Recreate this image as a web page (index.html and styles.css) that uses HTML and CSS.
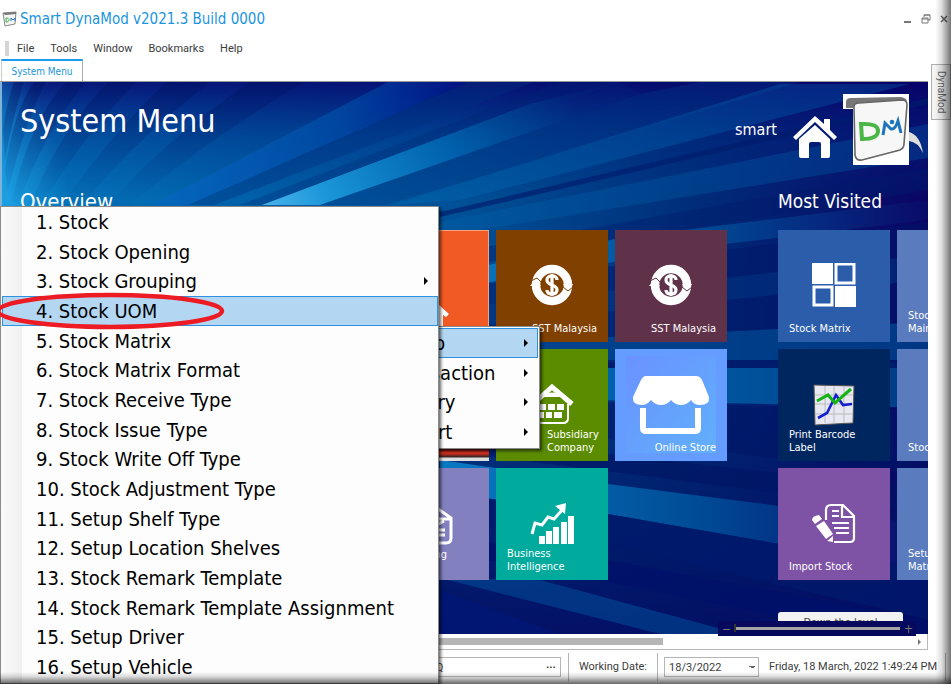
FILE: index.html
```html
<!DOCTYPE html>
<html lang="en">
<head>
<meta charset="utf-8">
<title>Smart DynaMod</title>
<link rel="stylesheet" href="styles.css">
</head>
<body>
<svg class="defs" aria-hidden="true">
  <symbol id="coin" viewBox="0 0 44 42">
    <circle cx="22" cy="21" r="16" fill="none" stroke="#fff" stroke-width="8.5"/>
    <path d="M0 22l6-7 5 7zM33 20l10 0-5 7z" fill="#fff"/>
    <path d="M1 17l6-3 4 4M33 23l5 4 5-4" fill="none" stroke="currentColor" stroke-width="1"/>
    <path d="M27 16c0-3-2-4-5-4s-5 1-5 4 2 4 5 5 5 2 5 5-2 4-5 4-5-1-5-4M22 10v22" fill="none" stroke="#fff" stroke-width="3.2"/>
  </symbol>
</svg>
<div class="app">
  <header class="titlebar">
    <svg class="logo" viewBox="0 0 16 16"><path d="M1 2l13-1-1 12-10 2z" fill="#f4f4f4" stroke="#888" stroke-width="1"/><path d="M1 2l13-1v2L3 4z" fill="#777"/><path d="M4 7v4c4 0 4-4 0-4z" fill="none" stroke="#3fae49"/><path d="M9 10V7l2 2 2-2v3" fill="none" stroke="#1f7ac4"/></svg>
    <h1 class="title">Smart DynaMod v2021.3 Build 0000</h1>
    <div class="winbtns">
      <button aria-label="Minimize"><svg viewBox="0 0 10 10"><path d="M1 8h7" stroke="#777" stroke-width="2"/></svg></button>
      <button aria-label="Restore"><svg viewBox="0 0 10 10"><path d="M3 3V1h6v5H7M1 4h6v5H1zM1 5h6M3 1h6" fill="none" stroke="#777"/></svg></button>
      <button aria-label="Close"><svg viewBox="0 0 10 10"><path d="M2 2l6 6M8 2l-6 6" stroke="#666" stroke-width="1.5"/></svg></button>
    </div>
  </header>
  <nav class="menubar">
    <button>File</button><button>Tools</button><button>Window</button><button>Bookmarks</button><button>Help</button>
  </nav>
  <div class="workspace">
    <main class="main">
      <div class="tabs"><button class="tab">System Menu</button></div>
      <section class="panel">
        <svg class="rays" viewBox="2 82 926 552" preserveAspectRatio="none" aria-hidden="true">
          <defs>
            <linearGradient id="base" x1="2" x2="928" y1="205" y2="250" gradientUnits="userSpaceOnUse"><stop offset="0" stop-color="#1c9fe2"/><stop offset=".07" stop-color="#0474ba"/><stop offset=".25" stop-color="#0062aa"/><stop offset=".5" stop-color="#005096"/><stop offset=".75" stop-color="#002c78"/><stop offset="1" stop-color="#0a0464"/></linearGradient>
            <linearGradient id="top" x1="0" y1="82" x2="0" y2="200" gradientUnits="userSpaceOnUse"><stop offset="0" stop-color="#08006a" stop-opacity=".8"/><stop offset=".5" stop-color="#002480" stop-opacity=".4"/><stop offset="1" stop-color="#00308a" stop-opacity="0"/></linearGradient>
            <linearGradient id="glow" x1="2" y1="180" x2="60" y2="160" gradientUnits="userSpaceOnUse"><stop offset="0" stop-color="#1c9fe2" stop-opacity=".8"/><stop offset="1" stop-color="#0474ba" stop-opacity="0"/></linearGradient>
            <linearGradient id="fan" x1="0" y1="82" x2="0" y2="200" gradientUnits="userSpaceOnUse"><stop offset="0" stop-color="#00105e" stop-opacity=".42"/><stop offset="1" stop-color="#00307e" stop-opacity=".05"/></linearGradient>
            <linearGradient id="cyan" x1="262" x2="570" y1="205" y2="95" gradientUnits="userSpaceOnUse"><stop offset="0" stop-color="#4ab4ea"/><stop offset=".2" stop-color="#1a95d8"/><stop offset=".6" stop-color="#0068b2" stop-opacity=".8"/><stop offset="1" stop-color="#004a98" stop-opacity=".1"/></linearGradient>
            <linearGradient id="blue" x1="150" x2="470" y1="205" y2="82" gradientUnits="userSpaceOnUse"><stop offset="0" stop-color="#0569bd"/><stop offset=".6" stop-color="#0046a0"/><stop offset="1" stop-color="#001080"/></linearGradient>
            <linearGradient id="lit" x1="430" x2="928" y1="0" y2="0" gradientUnits="userSpaceOnUse"><stop offset="0" stop-color="#0078c4"/><stop offset=".5" stop-color="#005aa2"/><stop offset="1" stop-color="#003a88"/></linearGradient>
            <linearGradient id="fade" x1="430" x2="928" y1="0" y2="0" gradientUnits="userSpaceOnUse"><stop offset="0" stop-color="#0a7cc6"/><stop offset=".55" stop-color="#004a94"/><stop offset="1" stop-color="#0a0a6a"/></linearGradient>
            <linearGradient id="floor" x1="600" y1="380" x2="560" y2="640" gradientUnits="userSpaceOnUse"><stop offset="0" stop-color="#001464" stop-opacity="0"/><stop offset=".5" stop-color="#001464" stop-opacity=".7"/><stop offset="1" stop-color="#040860" stop-opacity=".85"/></linearGradient>
          </defs>
          <path d="M2 82h926v552H2z" fill="url(#base)"/>
          <path d="M2 82h926v552H2z" fill="url(#floor)"/>
          <path d="M2 82h926v120H2z" fill="url(#top)"/>
          <path d="M2 82h70v130H2z" fill="url(#glow)"/>
          <g fill="url(#fan)">
            <path d="M3 130Q6 105 14 82h10Q12 120 5 160z"/>
            <path d="M5 170Q14 110 34 82h12Q26 120 8 190z"/>
            <path d="M12 200Q30 120 66 82h20Q45 130 18 205z"/>
            <path d="M30 205Q60 130 108 82h28Q80 140 42 205z"/>
            <path d="M62 205Q110 135 166 82h44Q130 145 82 205z"/>
            <path d="M108 205Q170 135 250 82h54Q200 145 130 205z"/>
          </g>
          <path d="M152 205L388 82h80L188 205z" fill="url(#blue)"/>
          <path d="M188 205L468 82h66L214 205z" fill="#003080" opacity=".4"/>
          <path d="M240 205L560 82h60L262 205z" fill="#002474" opacity=".3"/>
          <path d="M262 205L530 104 620 82 640 94 320 205z" fill="url(#cyan)"/>
          <path d="M320 205L640 94 700 82h100L385 205z" fill="#003888" opacity=".35"/>
          <path d="M390 205L780 84h130L460 200z" fill="#0070bc" opacity=".3"/>
          <path d="M440 212L928 98v6L440 217z" fill="#001c6c" opacity=".65"/>
          <path d="M440 222L928 124v34L440 236z" fill="#0066b0" opacity=".3"/>
          <path d="M440 255L928 168v22L440 270z" fill="#001c6c" opacity=".4"/>
          <path d="M440 275L620 238 928 200v20L725 244 440 290z" fill="url(#fade)"/>
          <path d="M440 290L928 222v140H440z" fill="#001668" opacity=".5"/>
          <path d="M440 310L928 255v25L440 328z" fill="#004c96" opacity=".3"/>
          <path d="M440 345L928 322v38H440z" fill="#005098" opacity=".65"/>
          <path d="M440 362h488v6H440z" fill="#001c6c"/>
          <path d="M440 368h488v40L440 396z" fill="url(#lit)"/>
          <path d="M440 398L928 410v65L440 420z" fill="#001666" opacity=".6"/>
          <path d="M440 435L928 490v22L440 450z" fill="#001462" opacity=".6"/>
          <path d="M440 460L608 484 928 525v45L608 514 440 492z" fill="url(#fade)"/>
          <path d="M440 495L608 514 928 570v50L608 545 440 520z" fill="#001a6c" opacity=".75"/>
          <path d="M440 535L608 560 928 620v14h-60L608 582 440 552z" fill="#00106a" opacity=".7"/>
          <path d="M540 580L718 628 718 634H660L440 578z" fill="#0064ac" opacity=".4"/>
          <path d="M440 590L560 634H440z" fill="#00187a" opacity=".6"/>
        </svg>
        <div class="panel-head">
          <h2>System Menu</h2>
          <div class="user">
            <span>smart</span>
            <svg class="home" viewBox="0 0 44 42"><path d="M22 0l9 8V3h6v11l7 7-3 3L22 6 3 24l-3-3z" fill="#fff"/><path d="M22 9l15 14v17q0 2-2 2h-7V28q0-2-2-2h-8q-2 0-2 2v14H8q-2 0-2-2V23z" fill="#fff"/></svg>
            <svg class="brand" viewBox="0 0 82 72"><path d="M0 0h66v71H10V15H0z" fill="#fff"/><path d="M66 38q11 3 14 21-5-11-14-12z" fill="#ddd"/><path d="M3 14V8q0-4 5-4l50-1q6 1 6 5l-50 2-4 4z" fill="#777"/><path d="M11 13q0-4 5-4l43-3q5 0 5 5l-3 39q0 4-4 6L19 66q-6 1-7-5z" fill="#f7f7f7" stroke="#666" stroke-width="1.6"/><path d="M18 30l1 15q16 0 16-8 0-8-17-7z" fill="none" stroke="#4bb548" stroke-width="4"/><path d="M40 41l2-12 6 6q4 1 7-8l3 12" fill="none" stroke="#1c75bc" stroke-width="3"/><circle cx="49" cy="28" r="2.3" fill="#1c75bc"/></svg>
          </div>
        </div>
        <div class="groups">
          <section class="group overview">
            <h3>Overview</h3>
            <div class="tiles">
              <a href="#" class="tile orange c4" aria-label="Home"><svg class="cottage" viewBox="0 0 44 42"><path d="M2 23L22 4l21 19-3 3-3-2v16H7V24l-3 2z" fill="#fff"/></svg></a>
              <a href="#" class="tile brown right"><svg class="icon"><use href="#coin"/></svg><span>SST Malaysia</span></a>
              <a href="#" class="tile plum right"><svg class="icon"><use href="#coin"/></svg><span>SST Malaysia</span></a>
              <a href="#" class="tile photo c4" aria-label="Photo"></a>
              <a href="#" class="tile green right"><svg class="icon" viewBox="0 0 44 42"><path d="M3 21L22 4l20 17" fill="none" stroke="#fff" stroke-width="5"/><path d="M12 14q10-9 20 0z" fill="#fff"/><path d="M7 21v14q0 5 5 5h21q5 0 5-5V21" fill="none" stroke="#fff" stroke-width="2"/><path d="M10 21h6v6h-6zM18 21h7v6h-7zM27 21h7v6h-7zM10 29h4v6h-4zM16 29h6v6h-6zM24 29h8v6h-8z" fill="#fff"/></svg><span>Subsidiary Company</span></a>
              <a href="#" class="tile sky right"><svg class="shop" viewBox="0 0 90 97"><defs><linearGradient id="shopbg" x1="0" y1="0" x2="1" y2="1"><stop offset="0" stop-color="#6a92ff"/><stop offset="1" stop-color="#60b0fb"/></linearGradient></defs><path d="M0 0h90v97H0z" fill="url(#shopbg)"/><path d="M20 20h50q4 0 6 4l7 17q1 8-9 8-6 0-9-5-4 5-10 5t-10-5q-4 5-10 5t-10-5q-4 5-9 5-10 0-9-8l8-17q2-4 5-4z" fill="#fff"/><path d="M17 52v20q0 3 3 3h49q3 0 3-3V52" fill="none" stroke="#fff" stroke-width="6"/></svg><span>Online Store</span></a>
              <a href="#" class="tile lilac c4 right wide"><svg class="icon" viewBox="0 0 44 42"><path d="M4 17L22 2l20 14v20q0 5-5 5H8q-4 0-4-5zM4 17h38M26 24l9-5M28 28h8M28 33h8" fill="none" stroke="#fff" stroke-width="3"/></svg><span>e-Invoicing<br>&nbsp;</span></a>
              <a href="#" class="tile teal"><svg class="icon" viewBox="0 0 44 42"><path d="M9 34h6v8H9zM16 29h6v13h-6zM23 25h6v17h-6zM31 20h6v22h-6zM38 14h6v28h-6z" fill="#fff"/><path d="M2 32l3-11 7 2 6-8 6 2 9-10" fill="none" stroke="#fff" stroke-width="3"/><path d="M25 4l11-3-1 11z" fill="#fff"/></svg><span>Business<br>Intelligence</span></a>
            </div>
          </section>
          <section class="group visited">
            <h3>Most Visited</h3>
            <div class="tiles">
              <a href="#" class="tile royal"><svg class="icon" viewBox="0 0 44 44"><path d="M0 0h21v21H0zM23 23h21v21H23z" fill="#fff"/><path d="M24 1h18v19H24zM2 24h18v18H2z" fill="none" stroke="#fff" stroke-width="3"/></svg><span>Stock Matrix</span></a>
              <a href="#" class="tile slate"><span>Stock<br>Maintenance</span></a>
              <a href="#" class="tile navy"><svg class="icon" viewBox="0 0 44 42"><path d="M2 2l40 1-1 37-38 2z" fill="#e8e8f2" stroke="#555"/><path d="M13 3v37M22 3v37M32 3v37M3 12h38M3 21h38M3 31h38" stroke="#bbb"/><path d="M6 35l9-5 9-18 7 10 9-1" fill="none" stroke="#1420d0" stroke-width="2.6"/><path d="M5 18l11-6 7 8 16-14" fill="none" stroke="#14b414" stroke-width="3"/></svg><span>Print Barcode<br>Label</span></a>
              <a href="#" class="tile slate"><span>Stock In</span></a>
              <a href="#" class="tile violet"><svg class="icon" viewBox="0 0 44 42"><path d="M14 18V8q0-5 5-5h12l11 11v22q0 4-4 4H22M30 4v11h11M20 9h7M20 14h7M20 21h17M22 26h15M24 31h13" fill="none" stroke="#fff" stroke-width="2.2"/><path d="M0 18q0-4 7-5l3 4-7 5zM4 24l8-5 9 13-7 5zM15 39l6-5v6z" fill="#fff"/></svg><span>Import Stock</span></a>
              <a href="#" class="tile slate"><span>Setup<br>Matrix</span></a>
            </div>
            <button class="down">Down the level</button>
          </section>
        </div>
        <div class="zoombar"><button aria-label="Zoom out">−</button><input type="range" aria-label="Zoom" min="0" max="100" value="0"><button aria-label="Zoom in">+</button></div>
      </section>
      <div class="hscroll"><div class="thumb"></div><span class="arrow-r"></span></div>
    </main>
    <aside class="side"><button>DynaMod</button></aside>
  </div>
  <footer class="status">
    <div class="field"><input type="text" value="HQ" aria-label="Branch"><button aria-label="Browse">···</button></div>
    <label for="wdate">Working Date:</label>
    <select id="wdate"><option>18/3/2022</option></select>
    <time>Friday, 18 March, 2022 1:49:24 PM</time>
  </footer>
</div>

<div class="menu sub" role="menu">
  <button class="active arrow" role="menuitem">1. Setup</button>
  <button class="arrow" role="menuitem">2. Transaction</button>
  <button class="arrow" role="menuitem">3. Inquiry</button>
  <button class="arrow" role="menuitem">4. Report</button>
</div>
<div class="menu primary" role="menu">
  <button role="menuitem">1. Stock</button>
  <button role="menuitem">2. Stock Opening</button>
  <button class="arrow" role="menuitem">3. Stock Grouping</button>
  <button class="active" role="menuitem">4. Stock UOM</button>
  <button role="menuitem">5. Stock Matrix</button>
  <button role="menuitem">6. Stock Matrix Format</button>
  <button role="menuitem">7. Stock Receive Type</button>
  <button role="menuitem">8. Stock Issue Type</button>
  <button role="menuitem">9. Stock Write Off Type</button>
  <button role="menuitem">10. Stock Adjustment Type</button>
  <button role="menuitem">11. Setup Shelf Type</button>
  <button role="menuitem">12. Setup Location Shelves</button>
  <button role="menuitem">13. Stock Remark Template</button>
  <button role="menuitem">14. Stock Remark Template Assignment</button>
  <button role="menuitem">15. Setup Driver</button>
  <button role="menuitem">16. Setup Vehicle</button>
</div>
<svg class="mark" viewBox="0 0 228 38" aria-hidden="true"><ellipse cx="110" cy="19" rx="112" ry="16" fill="none" stroke="#ed1c24" stroke-width="4.5"/></svg>
<div class="edge edge-right"></div>
<div class="edge edge-bottom"></div>
</body>
</html>
```
FILE: styles.css
```css
* { box-sizing: border-box; }
body {
  margin: 0;
  height: 100vh;
  position: relative;
  overflow: hidden;
  background: #fff;
  font-family: Roboto, "Open Sans", sans-serif;
  font-size: 11px;
  color: #3c3c3c;
}
button, input, select { font: inherit; color: inherit; }
button { border: 0; background: none; padding: 0; }
h1, h2, h3 { margin: 0; font-weight: 400; }
.defs { position: absolute; width: 0; height: 0; }
.app { display: flex; flex-direction: column; height: 100%; }

.titlebar { display: flex; align-items: center; height: 37px; padding: 0 2px; }
.logo { width: 16px; height: 16px; margin-right: 2px; }
.title { flex: 1; font-family: "DejaVu Sans Condensed", "DejaVu Sans", sans-serif; font-size: 15px; color: #1a94dc; }
.winbtns { display: flex; gap: 8px; }
.winbtns button { width: 10px; height: 10px; }
.winbtns svg { display: block; width: 10px; height: 10px; }

.menubar { display: flex; align-items: center; gap: 16px; height: 22px; padding-left: 5px; }
.menubar::before { content: ""; width: 4px; height: 15px; margin-right: -8px; background: #d5d5d5; }

.workspace { display: flex; flex: 1; min-height: 0; }
.main { display: flex; flex: 1; flex-direction: column; min-width: 0; }
.tabs { display: flex; height: 23px; padding-left: 1px; border-bottom: 1px solid #999; }
.tab {
  width: 82px;
  border-top: 2px solid #1a9cf0;
  border-right: 1px solid #aaa;
  border-left: 1px solid #ccc;
  font-family: "DejaVu Sans Condensed", "DejaVu Sans", sans-serif;
  font-size: 10px;
  color: #1a94dc;
}
.panel {
  position: relative;
  flex: 1;
  min-height: 0;
  border-left: 2px solid #7fb4d8;
  background: #003080;
  color: #fff;
  font-family: "DejaVu Sans Condensed", "DejaVu Sans", sans-serif;
}
.rays { position: absolute; inset: 0; width: 100%; height: 100%; }
.panel-head { position: relative; display: flex; justify-content: space-between; height: 104px; padding: 12px 3px 0 18px; }
.panel-head h2 { padding-top: 6px; font-size: 32px; line-height: 42px; }
.user { display: flex; align-items: flex-start; font-size: 16px; }
.user span { line-height: 20px; padding-top: 26px; }
.home { width: 44px; height: 42px; margin: 22px 6px 0 16px; }
.brand { width: 82px; height: 72px; }

.groups { position: absolute; inset: 104px 0 0 0; display: flex; gap: 51px; padding-left: 18px; overflow: hidden; }
.group { flex: none; }
.group h3 { height: 44px; font-size: 19px; line-height: 30px; }
.overview h3 { font-size: 22px; line-height: 32px; }
.tiles { display: grid; grid-auto-rows: 112px; gap: 7px; }
.overview .tiles { grid-template-columns: repeat(6, 112px); }
.visited .tiles { grid-template-columns: repeat(2, 112px); }
.c4 { grid-column-start: 4; }
.tile {
  position: relative;
  display: flex;
  flex-direction: column;
  justify-content: flex-end;
  padding: 0 11px 7px;
  font-size: 11px;
  line-height: 13px;
  color: #fff;
  text-decoration: none;
}
.tile span { position: relative; }
.right { align-items: flex-end; }
.tile.right span { max-width: 72px; }
.tile.right:not(.green) span { white-space: nowrap; }
.green span { width: 50px; }
.icon { position: absolute; left: 34px; top: 33px; width: 44px; height: 44px; }
.shop { position: absolute; left: 11px; top: 7px; width: 90px; height: 97px; }
.cottage { position: absolute; left: 28px; top: 60px; width: 44px; height: 42px; }
.orange { background: #f15a24; border: 1px solid #f9a27f; }
.brown { background: #804000; color: #fff; }
.plum { background: #603249; }
.photo { background: linear-gradient(transparent 100px, #511 100px, #e33020 104px, #322 108px, #ddd 109px), linear-gradient(90deg, #c22 96px, #ddd 100px); }
.green { background: #5b8c00; }
.sky { background: #649dff; }
.lilac { background: #8380c0; }
.lilac .icon { left: 32px; }
.tile.lilac span { position: absolute; right: 42px; bottom: 6px; }
.teal { background: #00aa9d; }
.royal { background: #2b5dab; }
.slate { background: #5a7bbd; }
.navy { background: #00265f; }
.violet { background: #7e53a5; }
.brown .icon { color: #804000; }
.plum .icon { color: #603249; }
.down { display: block; width: 125px; height: 22px; margin-top: 32px; border-radius: 3px; background: #f2f2f2; color: #444; font-size: 11px; line-height: 22px; }
.zoombar { position: absolute; right: 12px; bottom: -2px; display: flex; align-items: center; width: 198px; height: 15px; background: #070a5c; color: #777; padding: 0 4px; gap: 4px; }
.zoombar button { width: 8px; font-size: 12px; line-height: 12px; }
.zoombar input { flex: 1; min-width: 0; margin: 0; height: 8px; appearance: none; background: none; }
.zoombar input::-webkit-slider-runnable-track { height: 3px; background: #a5a5a5; }
.zoombar input::-webkit-slider-thumb { appearance: none; width: 2px; height: 8px; margin-top: -3px; background: #333; }

.hscroll { display: flex; align-items: center; justify-content: space-between; height: 16px; padding-right: 6px; border-bottom: 1px solid #b8b8b8; border-right: 1px solid #b8b8b8; }
.thumb { width: 72%; height: 7px; background: #b6b6b6; }
.arrow-r { border: 3px solid transparent; border-left: 3px solid #777; border-right: 0; }
.side { width: 23px; padding: 5px 0 0 3px; }
.side button { width: 20px; height: 56px; border: 1px solid #b0b0b0; background: #f4f4f4; writing-mode: vertical-rl; font-size: 10px; color: #666; }

.status { display: flex; align-items: center; justify-content: flex-end; height: 34px; padding-right: 5px; }
.field { display: flex; align-items: center; width: 140px; height: 20px; margin-right: 7px; border: 1px solid #b5b5b5; }
.field input { flex: 1; min-width: 0; border: 0; padding: 0 6px; }
.field button { width: 18px; font-weight: 700; }
.status label { height: 28px; padding: 0 10px; border-left: 1px solid #b5b5b5; border-right: 1px solid #b5b5b5; line-height: 28px; }
.status select {
  width: 95px;
  height: 20px;
  margin: 0 0 0 6px;
  padding: 0 4px;
  border: 1px solid #b5b5b5;
  border-radius: 0;
  appearance: none;
  background: linear-gradient(to bottom left, #666 50%, transparent 50%) 84px 8px / 3px 3px no-repeat, linear-gradient(to bottom right, #666 50%, transparent 50%) 87px 8px / 3px 3px no-repeat, #fff;
}
.status time { padding: 0 8px 0 10px; border-right: 1px solid #b5b5b5; line-height: 28px; }

.menu {
  position: absolute;
  display: flex;
  flex-direction: column;
  border: 1px solid #8a8a8a;
  background: linear-gradient(90deg, #fafafa, #f0f0f0 21px, #fdfdfd 21px);
  box-shadow: 2px 2px 3px rgba(0, 0, 0, .6);
  font-family: "DejaVu Sans Condensed", "DejaVu Sans", sans-serif;
  font-size: 20px;
  color: #000;
}
.menu button { position: relative; flex: 1; min-height: 0; padding-left: 33px; text-align: left; border: 1px solid transparent; line-height: 24px; }
.menu .active { background: #b3d7f3; border-color: #2f8fe0; }
.menu .arrow::after { content: ""; position: absolute; right: 9px; top: 50%; margin-top: -4px; border: 4px solid transparent; border-left: 4px solid #000; border-right: 0; }
.primary { left: 0; top: 206px; bottom: 0; width: 439px; padding: 0 0 1px 1px; }
.sub { left: 334px; top: 326px; width: 206px; height: 123px; padding: 1px; }
.mark { position: absolute; left: 0; top: 292px; width: 228px; height: 38px; }
.edge { position: absolute; pointer-events: none; }
.edge-right { right: 0; top: 0; bottom: 0; width: 16px; background: linear-gradient(90deg, transparent, rgba(0, 0, 0, .12) 40%, rgba(0, 0, 0, .55)); }
.edge-bottom { left: 0; right: 0; bottom: 0; height: 12px; background: linear-gradient(transparent, rgba(0, 0, 0, .15) 40%, rgba(0, 0, 0, .6)); }
```
